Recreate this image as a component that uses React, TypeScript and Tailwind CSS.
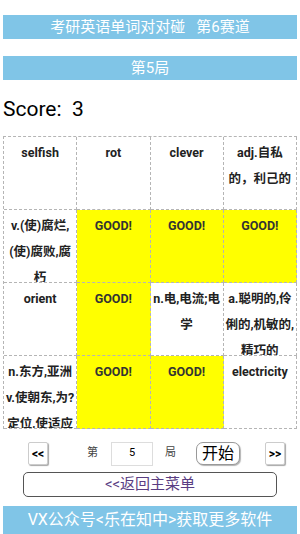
import React from 'react';

const FONT = { fontFamily: 'Roboto, "Noto Sans CJK SC", sans-serif' };

type Cell = { lines: string[]; good?: boolean };

const cells: Cell[] = [
  { lines: ['selfish'] },
  { lines: ['rot'] },
  { lines: ['clever'] },
  { lines: ['adj.自私', '的，利己的'] },
  { lines: ['v.(使)腐烂,', '(使)腐败,腐', '朽'] },
  { lines: ['GOOD!'], good: true },
  { lines: ['GOOD!'], good: true },
  { lines: ['GOOD!'], good: true },
  { lines: ['orient'] },
  { lines: ['GOOD!'], good: true },
  { lines: ['n.电,电流;电', '学'] },
  { lines: ['a.聪明的,伶', '俐的,机敏的,', '精巧的'] },
  { lines: ['n.东方,亚洲', 'v.使朝东,为?', '定位,使适应'] },
  { lines: ['GOOD!'], good: true },
  { lines: ['GOOD!'], good: true },
  { lines: ['electricity'] },
];

export default function App() {
  return (
    <div className="w-[300px] h-[534px] bg-white overflow-hidden flex flex-col" style={FONT}>
      {/* title bars */}
      <div className="mt-[15px] mx-[3px] h-[25px] bg-[#80c5e7] text-white text-[15px] flex items-center justify-center whitespace-pre">
        考研英语单词对对碰   第6赛道
      </div>
      <div className="mt-[17px] mx-[3px] h-[24px] bg-[#80c5e7] text-white text-[15px] flex items-center justify-center">
        第5局
      </div>

      <div className="mt-[17px] ml-[3px] h-[24px] text-[21px] leading-[24px] text-black whitespace-pre">Score:  3</div>

      {/* word grid */}
      <div className="mt-[15px] mx-[3px] grid grid-cols-4 border-t border-l border-dashed border-[#b5b5b5]">
        {cells.map((c, i) => (
          <div
            key={i}
            className={`h-[73px] overflow-hidden border-r border-b border-dashed border-[#b5b5b5] pt-[3px] flex flex-col items-center text-[12.5px] font-bold leading-[26px] ${
              c.good ? 'bg-[#ffff00] text-[#333]' : 'bg-white text-[#222]'
            }`}
          >
            {c.lines.map((l, j) => (
              <div key={j} className="whitespace-nowrap">{l}</div>
            ))}
          </div>
        ))}
      </div>

      {/* round controls */}
      <div className="mt-[13px] h-[24px] flex items-center text-[12px]">
        <button className="ml-[28px] w-[20px] h-[23px] bg-white border border-[#ccc] rounded-[2px] shadow-[1px_1px_1px_rgba(0,0,0,0.35)] font-bold text-[12px] text-black flex items-center justify-center">
          &lt;&lt;
        </button>
        <span className="ml-[39px] text-[#444] text-[11px]">第</span>
        <div className="ml-[13px] w-[42px] h-[24px] border border-[#ddd] flex items-center justify-center text-[11px] text-black">5</div>
        <span className="ml-[12px] text-[#444] text-[11px]">局</span>
        <button className="ml-[20px] w-[44px] h-[23px] bg-white border border-[#999] rounded-[7px] shadow-[1px_1px_1px_rgba(0,0,0,0.3)] text-[16px] text-black flex items-center justify-center">
          开始
        </button>
        <button className="ml-[25px] w-[20px] h-[23px] bg-white border border-[#ccc] rounded-[2px] shadow-[1px_1px_1px_rgba(0,0,0,0.35)] font-bold text-[12px] text-black flex items-center justify-center">
          &gt;&gt;
        </button>
      </div>

      <button className="mt-[6px] mx-[23px] h-[26px] border border-[#555] rounded-[5px] bg-white text-[15px] text-[#5a3d82] flex items-center justify-center">
        &lt;&lt;返回主菜单
      </button>

      <div className="mt-[9px] mx-[3px] h-[29px] bg-[#80c5e7] text-white text-[16px] flex items-center justify-center">
        VX公众号&lt;乐在知中&gt;获取更多软件
      </div>
    </div>
  );
}
